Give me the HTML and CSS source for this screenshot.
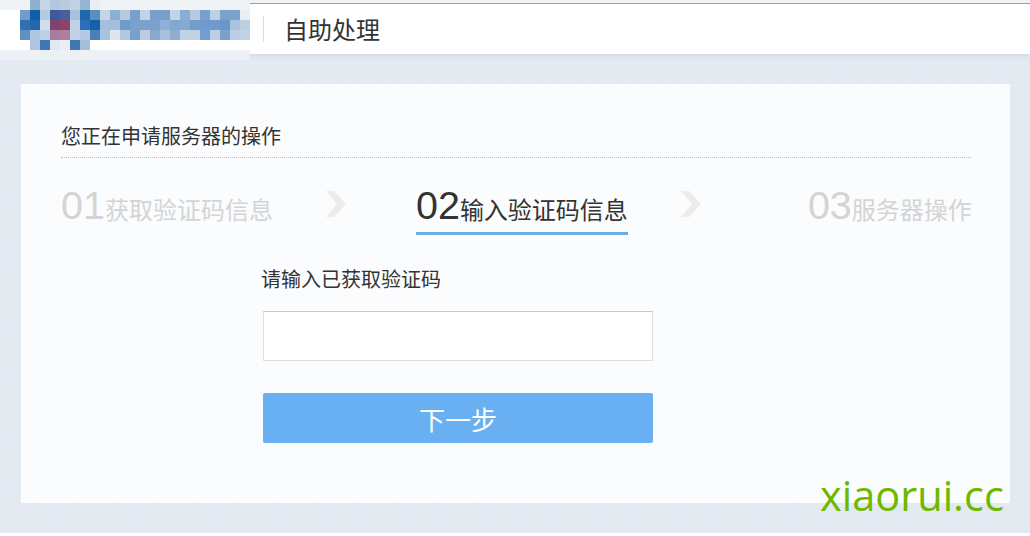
FILE: index.html
```html
<!DOCTYPE html>
<html lang="zh-CN">
<head>
    <meta charset="UTF-8">
    <meta name="viewport" content="width=device-width, initial-scale=1.0">
    <title>自助处理</title>
    <link rel="stylesheet" href="styles.css">
</head>
<body>
    <div class="page">
        <header class="topbar">
            <svg class="logo" width="250" height="60" viewBox="0 0 250 60" shape-rendering="crispEdges">
                <rect width="250" height="10" fill="#f0f3f6"/>
                <rect y="50" width="250" height="10" fill="#edf0f5"/>
                <rect y="10" width="250" height="40" fill="#fff"/>
                <!-- row 0 -->
                <rect x="30" y="0" width="10" height="10" fill="#8eb0d2"/><rect x="40" y="0" width="10" height="10" fill="#c5d5e5"/><rect x="50" y="0" width="10" height="10" fill="#b0c7de"/><rect x="60" y="0" width="10" height="10" fill="#b8cce0"/><rect x="70" y="0" width="10" height="10" fill="#c0d2e3"/><rect x="80" y="0" width="10" height="10" fill="#95b5d3"/><rect x="90" y="0" width="10" height="10" fill="#e8eef3"/>
                <!-- row 1 -->
                <rect x="20" y="10" width="10" height="10" fill="#6f9ccb"/><rect x="30" y="10" width="10" height="10" fill="#125ea8"/><rect x="40" y="10" width="10" height="10" fill="#b5cbe2"/><rect x="50" y="10" width="10" height="10" fill="#3f5a9a"/><rect x="60" y="10" width="10" height="10" fill="#45609c"/><rect x="70" y="10" width="10" height="10" fill="#a7c1dd"/><rect x="80" y="10" width="10" height="10" fill="#1f68ae"/><rect x="90" y="10" width="10" height="10" fill="#5b8fc0"/><rect x="100" y="10" width="10" height="10" fill="#c5d6e8"/><rect x="110" y="10" width="10" height="10" fill="#8eafd3"/><rect x="120" y="10" width="10" height="10" fill="#b5cae0"/><rect x="130" y="10" width="10" height="10" fill="#78a0cb"/><rect x="140" y="10" width="10" height="10" fill="#c2d3e6"/><rect x="150" y="10" width="10" height="10" fill="#78a0cb"/><rect x="160" y="10" width="10" height="10" fill="#78a0cb"/><rect x="170" y="10" width="10" height="10" fill="#c2d4e6"/><rect x="180" y="10" width="10" height="10" fill="#8cadd3"/><rect x="190" y="10" width="10" height="10" fill="#b5cae0"/><rect x="200" y="10" width="10" height="10" fill="#78a0cb"/><rect x="210" y="10" width="10" height="10" fill="#bdd0e5"/><rect x="220" y="10" width="10" height="10" fill="#7ba2cc"/><rect x="230" y="10" width="10" height="10" fill="#7ba2cc"/><rect x="240" y="10" width="10" height="10" fill="#e8eef3"/>
                <!-- row 2 -->
                <rect x="20" y="20" width="10" height="10" fill="#2f70b5"/><rect x="30" y="20" width="10" height="10" fill="#2268af"/><rect x="40" y="20" width="10" height="10" fill="#d0deec"/><rect x="50" y="20" width="10" height="10" fill="#7b4472"/><rect x="60" y="20" width="10" height="10" fill="#8a4468"/><rect x="70" y="20" width="10" height="10" fill="#c0d2e8"/><rect x="80" y="20" width="10" height="10" fill="#2d6eb4"/><rect x="90" y="20" width="10" height="10" fill="#1560aa"/><rect x="100" y="20" width="10" height="10" fill="#a5c0de"/><rect x="110" y="20" width="10" height="10" fill="#a5bedb"/><rect x="120" y="20" width="10" height="10" fill="#6f9bca"/><rect x="130" y="20" width="10" height="10" fill="#7ba1cc"/><rect x="140" y="20" width="10" height="10" fill="#7ba1cc"/><rect x="150" y="20" width="10" height="10" fill="#7ba1cc"/><rect x="160" y="20" width="10" height="10" fill="#8fb0d6"/><rect x="170" y="20" width="10" height="10" fill="#84a7d0"/><rect x="180" y="20" width="10" height="10" fill="#86a9d2"/><rect x="190" y="20" width="10" height="10" fill="#70a0ca"/><rect x="200" y="20" width="10" height="10" fill="#6f9acb"/><rect x="210" y="20" width="10" height="10" fill="#709acb"/><rect x="220" y="20" width="10" height="10" fill="#6c96c7"/><rect x="230" y="20" width="10" height="10" fill="#a9c2dd"/><rect x="240" y="20" width="10" height="10" fill="#bccfe0"/>
                <!-- row 3 -->
                <rect x="20" y="30" width="10" height="10" fill="#5f90c2"/><rect x="30" y="30" width="10" height="10" fill="#aec6e0"/><rect x="40" y="30" width="10" height="10" fill="#bed0e5"/><rect x="50" y="30" width="10" height="10" fill="#a87c9e"/><rect x="60" y="30" width="10" height="10" fill="#b07f9a"/><rect x="70" y="30" width="10" height="10" fill="#c0d2e8"/><rect x="80" y="30" width="10" height="10" fill="#b4cae2"/><rect x="90" y="30" width="10" height="10" fill="#4a80ba"/><rect x="100" y="30" width="10" height="10" fill="#a9c2dd"/><rect x="110" y="30" width="10" height="10" fill="#dde6f0"/><rect x="120" y="30" width="10" height="10" fill="#b2c8e0"/><rect x="130" y="30" width="10" height="10" fill="#78a0cb"/><rect x="140" y="30" width="10" height="10" fill="#bacde2"/><rect x="150" y="30" width="10" height="10" fill="#8aa8cc"/><rect x="160" y="30" width="10" height="10" fill="#a9c0dc"/><rect x="170" y="30" width="10" height="10" fill="#8eadd0"/><rect x="180" y="30" width="10" height="10" fill="#c0d2e4"/><rect x="190" y="30" width="10" height="10" fill="#c0d2e4"/><rect x="200" y="30" width="10" height="10" fill="#739dcc"/><rect x="210" y="30" width="10" height="10" fill="#bccfe4"/><rect x="220" y="30" width="10" height="10" fill="#7a9fc9"/><rect x="230" y="30" width="10" height="10" fill="#bccfe2"/><rect x="240" y="30" width="10" height="10" fill="#c0d2e4"/>
                <!-- row 4 -->
                <rect x="30" y="40" width="10" height="10" fill="#aec6e0"/><rect x="40" y="40" width="10" height="10" fill="#3f78b5"/><rect x="50" y="40" width="10" height="10" fill="#e0e8f2"/><rect x="60" y="40" width="10" height="10" fill="#e8eef4"/><rect x="70" y="40" width="10" height="10" fill="#3f78b5"/><rect x="80" y="40" width="10" height="10" fill="#a5bedb"/>
            </svg>
            <h1 class="topbar-title">自助处理</h1>
        </header>

        <main class="card">
            <h2 class="card-title">您正在申请服务器的操作</h2>

            <div class="steps">
                <div class="step"><span class="step-num">01</span>获取验证码信息</div>
                <svg class="step-arrow" width="22" height="28" viewBox="0 0 22 28"><polygon points="1,1 9,1 21,14 9,27 1,27 12,14" fill="#ececec"/></svg>
                <div class="step step-active"><span class="step-num">02</span>输入验证码信息</div>
                <svg class="step-arrow step-arrow-last" width="22" height="28" viewBox="0 0 22 28"><polygon points="1,1 9,1 21,14 9,27 1,27 12,14" fill="#ececec"/></svg>
                <div class="step"><span class="step-num">03</span>服务器操作</div>
            </div>

            <form class="code-form">
                <label class="code-label" for="code">请输入已获取验证码</label>
                <input class="code-input" type="text" id="code">
                <button class="code-btn" type="button">下一步</button>
            </form>
        </main>
    </div>
    <div class="watermark">xiaorui.cc</div>
</body>
</html>
```

FILE: styles.css
```css
html, body {
    margin: 0;
    height: 536px;
    overflow: hidden;
    background-color: #fff;
    font-family: "Noto Sans CJK SC", "Liberation Sans", sans-serif;
    color: #333;
}

.page {
    height: 533px;
    background-color: #e3e9f1;
    background-image:
        repeating-linear-gradient(90deg, rgba(255, 255, 255, 0.07) 0 1px, transparent 1px 5px),
        repeating-linear-gradient(0deg, rgba(255, 255, 255, 0.06) 0 1px, transparent 1px 7px);
}

.topbar {
    display: flex;
    align-items: flex-start;
    height: 54px;
    background: linear-gradient(to bottom, #f0f3f6 0, #f0f3f6 3px, #8fa3b6 3px, #8fa3b6 4px, #fff 4px);
    box-shadow: 0 2px 5px rgba(0, 0, 0, 0.07);
}

.logo {
    display: block;
    flex: none;
}

.topbar-title {
    margin: 16px 0 0 13px;
    padding-left: 20px;
    height: 26px;
    border-left: 1px solid #dddddd;
    font-size: 24px;
    font-weight: normal;
    line-height: 26px;
    color: #333;
}

.card {
    margin: 30px 20px 0 21px;
    height: 419px;
    box-sizing: border-box;
    padding: 0 39px 0 40px;
    background-color: #fafcfe;
}

.card-title {
    margin: 0;
    height: 74px;
    box-sizing: border-box;
    padding-top: 38px;
    border-bottom: 1px dotted #bcbcbc;
    font-size: 20px;
    font-weight: normal;
    line-height: 28px;
    color: #333;
}

.steps {
    display: flex;
    align-items: flex-start;
    margin-top: 25px;
}

.step {
    height: 49px;
    font-size: 24px;
    line-height: 45px;
    color: #d4d4d4;
    white-space: nowrap;
}

.step-num {
    font-family: "Liberation Sans", sans-serif;
    font-size: 39.5px;
}

.step-active {
    color: #333;
    border-bottom: 3px solid #6aaee3;
}

.step-arrow {
    flex: none;
    margin: 7px 69px 0 52px;
}

.step-arrow-last {
    margin: 7px 106px 0 52px;
}

.code-form {
    display: flex;
    flex-direction: column;
    width: 392px;
    margin: 30px 0 0 200px;
}

.code-label {
    font-size: 20px;
    line-height: 28px;
    color: #333;
}

.code-input {
    box-sizing: border-box;
    width: 390px;
    height: 50px;
    margin: 18px 0 0 2px;
    border: 1px solid #e0e0e0;
    border-top-color: #c8c8c8;
    background-color: #fff;
}

.code-btn {
    width: 390px;
    height: 50px;
    margin: 32px 0 0 2px;
    padding: 0;
    border: none;
    border-radius: 2px;
    background-color: #68b0f2;
    color: #fff;
    font-family: inherit;
    font-size: 26px;
    cursor: pointer;
}

.watermark {
    position: absolute;
    left: 820px;
    top: 467px;
    font-family: "Open Sans", sans-serif;
    font-size: 41.5px;
    line-height: 56px;
    color: #6fb800;
}
```
